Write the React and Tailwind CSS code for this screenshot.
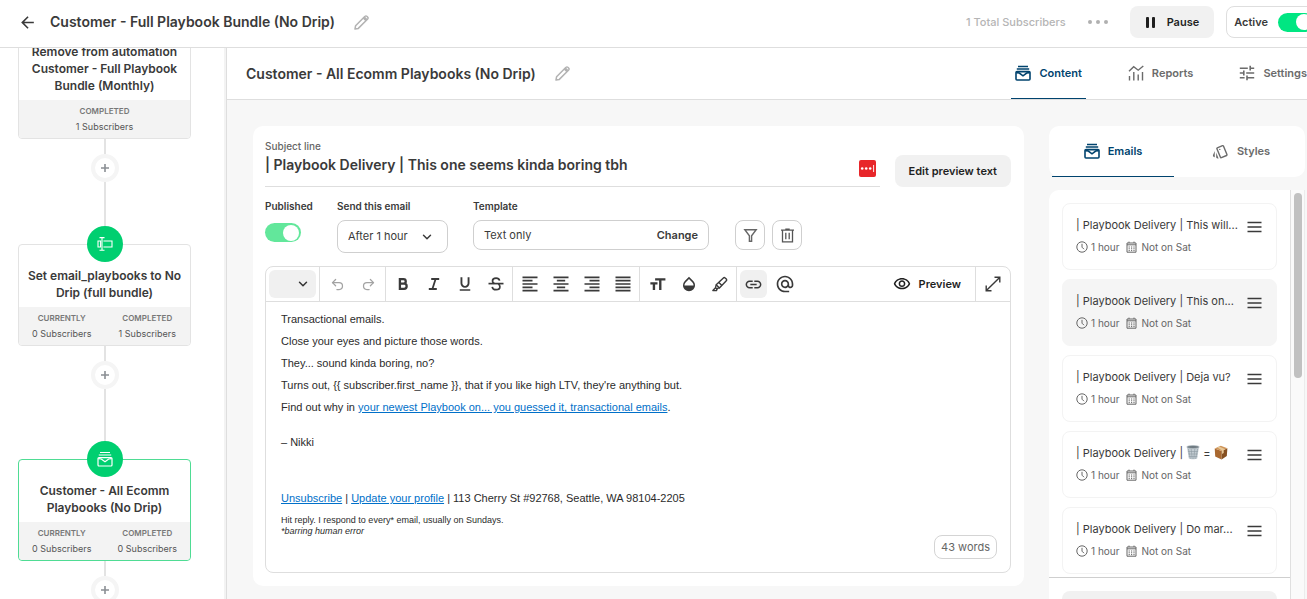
import React, { useState } from 'react';
import {
    MdArrowBack,
    MdTune,
    MdFormatAlignLeft,
    MdFormatAlignCenter,
    MdFormatAlignRight,
    MdFormatAlignJustify,
    MdFormatSize,
    MdOpacity,
    MdLink,
    MdAlternateEmail,
    MdOutlineVisibility,
    MdOutlineStyle,
    MdFormatUnderlined,
} from "react-icons/md";
import { ChevronDown, Undo2, Redo2 } from "lucide-react";

// ---- icons ----

const PencilIcon = () => (
    <svg width="15" height="15" viewBox="0 0 15 15" fill="none" stroke="#b3b3b3" strokeWidth="1.5" strokeLinejoin="round">
        <path d="M1 14l.6-3.3L11 1.3a1.3 1.3 0 0 1 1.9 0l.8.8a1.3 1.3 0 0 1 0 1.9L4.3 13.4 1 14z" />
        <path d="M9.3 3l2.7 2.7M10.3 2l2.7 2.7" />
    </svg>
);

const MailStackIcon = ({ size = 16, stroke = 1.6 }) => (
    <svg width={size} height={size} viewBox="0 0 16 16" fill="none" stroke="currentColor" strokeWidth={stroke}>
        <path d="M3 1.5h10M1.8 4h12.4" />
        <rect x="1" y="6.6" width="14" height="8.4" rx="1" />
        <path d="M1.3 7.6l3 .4L8 10.8 11.7 8l3-.4" />
    </svg>
);

const ReportsIcon = () => (
    <svg width="16" height="16" viewBox="0 0 16 16" fill="none" stroke="currentColor" strokeWidth="1.4">
        <path d="M1.5 15.5V11M5.8 15.5V7M10.2 15.5V9.5M14.5 15.5V7" />
        <path d="M1 6.3l4.7-4.6 4.5 3.5L15.3 1" />
    </svg>
);

const FieldIcon = () => (
    <svg width="16" height="16" viewBox="0 0 16 16" fill="none" stroke="currentColor" strokeWidth="1.1">
        <path d="M2.5 1.6h5M2.5 14.2h5M5 1.6v12.6" />
        <path d="M3.6 5H1v6h2.6V5zM6.4 5H15v6H6.4" />
    </svg>
);

const FilterIcon = () => (
    <svg width="15" height="15" viewBox="0 0 15 15" fill="none" stroke="#666" strokeWidth="1.4">
        <path d="M1.8 1.7h11.4L8.6 7.8v5.5H6.4V7.8z" />
    </svg>
);

const TrashIcon = () => (
    <svg width="15" height="15" viewBox="0 0 15 15" fill="none" stroke="#555" strokeWidth="1.3">
        <path d="M1 2.2h13M5.3 1.2h4.4M2.5 2.2v11.6h10V2.2M5.8 4.8v6.4M9.2 4.8v6.4" />
    </svg>
);

const BoldIcon = () => (
    <svg width="16" height="16" viewBox="0 0 16 16" fill="none" stroke="currentColor" strokeWidth="2.3">
        <path d="M4.9 3.2h3.6a2.2 2.2 0 0 1 0 4.5H4.9zM4.9 7.7h4.2a2.5 2.5 0 0 1 0 5.1H4.9z" />
    </svg>
);

const ItalicIcon = () => (
    <svg width="16" height="16" viewBox="0 0 16 16" fill="none" stroke="currentColor" strokeWidth="1.8">
        <path d="M5.2 3h8M2.8 13h8M9.6 3L6.4 13" />
    </svg>
);

const StrikeIcon = () => (
    <svg width="16" height="16" viewBox="0 0 16 16" fill="none" stroke="currentColor" strokeWidth="1.7">
        <path d="M.5 7.6h15" />
        <path d="M11.6 4.6C11.2 3 9.9 2.2 8.1 2.2c-2 0-3.6 1-3.6 2.8 0 1.2.7 2 1.8 2.6M4.2 10.8c.3 1.8 1.8 2.9 3.9 2.9s3.8-1 3.8-3c0-1.2-.5-2.2-1.6-3.1" />
    </svg>
);

const HighlighterIcon = () => (
    <svg width="16" height="16" viewBox="0 0 16 16" fill="none" stroke="currentColor" strokeWidth="1.4" strokeLinejoin="round">
        <path d="M4.2 8.8l7.2-6.9c.5-.5 1.2-.5 1.7 0l1.2 1.2c.5.5.5 1.2 0 1.7l-6.9 7.1z" />
        <path d="M4.2 8.8l-.7 2.8.9 1 3-.7M6.9 6.4l3 3M3.5 11.8L.9 14.6h3.5l.9-2" />
    </svg>
);

const ExpandIcon = () => (
    <svg width="16" height="16" viewBox="0 0 16 16" fill="none" stroke="currentColor" strokeWidth="1.4">
        <path d="M9.5 1.2h5.3v5.3M6.5 14.8H1.2V9.5M14.6 1.4L1.4 14.6" />
    </svg>
);

const ClockIcon = () => (
    <svg width="12" height="12" viewBox="0 0 12 12" fill="none" stroke="currentColor" strokeWidth="1">
        <circle cx="6" cy="6" r="5.2" />
        <path d="M6 2.8v3.4l2 2" />
    </svg>
);

const CalendarIcon = () => (
    <svg width="11" height="12" viewBox="0 0 11 12" fill="none" stroke="currentColor" strokeWidth="1">
        <path d="M1 2h9v9.2H1zM1 3.8h9M3 .6V2M8 .6V2" />
        <path d="M2.6 6h6M2.6 7.8h6M2.6 9.6h6" strokeDasharray="1.2 1.2" />
    </svg>
);

const MenuIcon = () => (
    <svg width="15" height="12" viewBox="0 0 15 12" stroke="#3a3a3a" strokeWidth="1.4">
        <path d="M.5 1.5h14M.5 6h14M.5 10.5h14" />
    </svg>
);

const BinEmoji = () => (
    <svg role="img" aria-label="wastebasket" className="inline-block align-[-3px]" width="14" height="15" viewBox="0 0 14 15">
        <path d="M1 2l1.8 11.6c1.2 1 7.2 1 8.4 0L13 2z" fill="#c3ccd2" />
        <path d="M2.4 4l2 9.8M5.2 4l1 10M8.8 4l-1 10M11.6 4l-2 9.8M2 6.5h10M2.4 9h9.2M2.8 11.5h8.4" stroke="#8d9aa3" strokeWidth=".6" fill="none" />
        <ellipse cx="7" cy="2" rx="6.3" ry="1.5" fill="#6f7a82" stroke="#b2bcc2" strokeWidth=".7" />
    </svg>
);

const BoxEmoji = () => (
    <svg role="img" aria-label="package" className="inline-block align-[-3px]" width="14" height="15" viewBox="0 0 14 15">
        <path d="M.7 3.6L7.6 6v8.4L1.2 11.5z" fill="#a9682f" />
        <path d="M7.6 6l5.8-2.7-.6 7.8-5.2 3.3z" fill="#865021" />
        <path d="M.7 3.6L6.8.8l6.6 2.5L7.6 6z" fill="#cf955a" />
        <path d="M3.4 2.4L5 1.6l6.3 2.6-1.6.9v3l-1.7.8V5.6z" fill="#e6c797" />
    </svg>
);

// ---- data ----

const emails = [
    { id: 1, title: '| Playbook Delivery | This will...' },
    { id: 2, title: '| Playbook Delivery | This on...', selected: true },
    { id: 3, title: '| Playbook Delivery | Deja vu?' },
    { id: 4, title: <>| Playbook Delivery | <BinEmoji /> = <BoxEmoji /></> },
    { id: 5, title: '| Playbook Delivery | Do mar...' },
];

const mainTabs = [
    { name: 'Content', icon: <MailStackIcon /> },
    { name: 'Reports', icon: <ReportsIcon /> },
    { name: 'Settings', icon: <MdTune size={16} viewBox="2 2 20 20" /> },
];

// ---- parts ----

function Toggle({ id, checked, onChange, label, colorClass }) {
    return (
        <label htmlFor={id} className="block shrink-0 cursor-pointer">
            <input id={id} type="checkbox" className="peer sr-only" aria-label={label} checked={checked} onChange={onChange} />
            <span className={`flex h-[19px] w-9 items-center rounded-full px-0.5 ${checked ? `justify-end ${colorClass}` : 'justify-start bg-gray-300'}`}>
                <span className="size-4 rounded-full bg-white" />
            </span>
        </label>
    );
}

function StepCard({ title, stats, icon, active }) {
    return (
        <div className="flex w-full flex-col items-center">
            {icon && (
                <div className="relative z-10 -mb-[18px] flex size-9 items-center justify-center rounded-full bg-[#00cf70] text-white">
                    {icon}
                </div>
            )}
            <div className={`w-full rounded border bg-white ${active ? 'border-[#4fdc94]' : 'border-[#e3e3e3]'}`}>
                <h3 className="px-1.5 pt-[22px] pb-1.5 text-center text-xs leading-[17px] font-semibold text-[#3a3a3a]">{title}</h3>
                <div className="flex h-[38px] rounded-b bg-[#f3f3f3] pt-1">
                    {stats.map(([label, value]) => (
                        <div key={label} className="flex-1 text-center">
                            <div className="text-[8px] leading-[15px] font-semibold text-[#777]">{label}</div>
                            <div className="text-[9px] leading-[15px] text-[#555]">{value}</div>
                        </div>
                    ))}
                </div>
            </div>
        </div>
    );
}

function Connector({ lineClass }) {
    return (
        <>
            <div className="h-[15px] w-0.5 bg-[#e3e3e3]" />
            <button aria-label="Add step" className="flex size-7 shrink-0 items-center justify-center rounded-full border-4 border-[#f5f5f5] bg-white">
                <svg width="8" height="8" viewBox="0 0 8 8" stroke="#8b8f94" strokeWidth="1.6">
                    <path d="M4 0v8M0 4h8" />
                </svg>
            </button>
            <div className={`w-0.5 shrink-0 bg-[#e3e3e3] ${lineClass}`} />
        </>
    );
}

function ToolGroup({ children, className = 'border-r px-px' }) {
    return (
        <div className={`flex items-center border-[#dedede] ${className}`}>{children}</div>
    );
}

function Tool({ label, children, className = 'text-[#3a3a3a]' }) {
    return (
        <button aria-label={label} className={`flex h-7 w-[31px] items-center justify-center ${className}`}>{children}</button>
    );
}

function EmailCard({ title, selected }) {
    return (
        <li className={`h-[67px] shrink-0 rounded-lg border pt-[13px] pr-3.5 pl-[13px] ${selected ? 'border-[#f5f5f5] bg-[#f5f5f5]' : 'border-[#f3f3f3] bg-white'}`}>
            <div className="flex h-4 items-center justify-between">
                <span className="text-[11px] leading-4 whitespace-nowrap text-[#3a3a3a]">{title}</span>
                <button aria-label="Reorder" className="pt-1">
                    <MenuIcon />
                </button>
            </div>
            <div className="mt-2 flex items-center text-[10px] leading-3 text-[#666]">
                <ClockIcon />
                <span className="ml-[3px]">1 hour</span>
                <span className="mr-1 ml-[7px]"><CalendarIcon /></span>
                <span>Not on Sat</span>
            </div>
        </li>
    );
}

function Editor() {
    return (
        <div className="mt-[13px] rounded-lg border border-[#dedede]">
            <div className="flex h-[35px] border-b border-[#dedede]">
                <div className="relative flex items-center border-r border-[#dedede] px-[3px]">
                    <select aria-label="Text style" className="h-7 w-[47px] appearance-none rounded-md bg-[#f0f0f0]" defaultValue="">
                        <option value=""></option>
                    </select>
                    <ChevronDown size={14} strokeWidth={2.5} className="pointer-events-none absolute right-[9px] text-[#333]" />
                </div>
                <ToolGroup className="border-r pr-px pl-0.5">
                    <Tool label="Undo" className="text-[#a3a3a3]"><Undo2 size={15} /></Tool>
                    <Tool label="Redo" className="text-[#a3a3a3]"><Redo2 size={15} /></Tool>
                </ToolGroup>
                <ToolGroup>
                    <Tool label="Bold"><BoldIcon /></Tool>
                    <Tool label="Italic"><ItalicIcon /></Tool>
                    <Tool label="Underline"><MdFormatUnderlined size={18} /></Tool>
                    <Tool label="Strikethrough"><StrikeIcon /></Tool>
                </ToolGroup>
                <ToolGroup>
                    <Tool label="Align left"><MdFormatAlignLeft size={20} /></Tool>
                    <Tool label="Align center"><MdFormatAlignCenter size={20} /></Tool>
                    <Tool label="Align right"><MdFormatAlignRight size={20} /></Tool>
                    <Tool label="Justify"><MdFormatAlignJustify size={20} /></Tool>
                </ToolGroup>
                <ToolGroup className="border-r pr-px pl-0.5">
                    <Tool label="Font size"><MdFormatSize size={19} /></Tool>
                    <Tool label="Text color"><MdOpacity size={18} /></Tool>
                    <Tool label="Highlight"><HighlighterIcon /></Tool>
                </ToolGroup>
                <ToolGroup className="px-px">
                    <Tool label="Link">
                        <span className="flex h-7 w-[27px] items-center justify-center rounded-md bg-[#f0f0f0]"><MdLink size={19} /></span>
                    </Tool>
                    <Tool label="Personalize"><MdAlternateEmail size={20} /></Tool>
                </ToolGroup>
                <button className="ml-auto flex items-center gap-2 pr-3.5 text-[11px] font-semibold text-[#1f1f1f]">
                    <MdOutlineVisibility size={18} />
                    Preview
                </button>
                <button aria-label="Full screen" className="flex w-[35px] items-center justify-center border-l border-[#dedede] text-[#3a3a3a]">
                    <ExpandIcon />
                </button>
            </div>
            <div className="relative h-[270px] px-[15px] pt-1.5 font-['Liberation_Sans',Arial,sans-serif] text-[11px] leading-[22px] text-[#2b2b2b]">
                <p>Transactional emails.</p>
                <p>Close your eyes and picture those words.</p>
                <p>They... sound kinda boring, no?</p>
                <p>Turns out, {'{{ subscriber.first_name }}'}, that if you like high LTV, they're anything but.</p>
                <p>Find out why in <a href="#playbook" className="text-[#0070c9] underline">your newest Playbook on... you guessed it, transactional emails</a>.</p>
                <p className="mt-[13px]">– Nikki</p>
                <p className="mt-[34px]">
                    <a href="#unsubscribe" className="text-[#0070c9] underline">Unsubscribe</a> | <a href="#profile" className="text-[#0070c9] underline">Update your profile</a> | 113 Cherry St #92768, Seattle, WA 98104-2205
                </p>
                <p className="mt-1.5 text-[9px] leading-[11px]">
                    Hit reply. I respond to every* email, usually on Sundays.<br />
                    <em>*barring human error</em>
                </p>
                <span className="absolute right-[13px] bottom-[13px] flex h-6 items-center rounded-lg border border-[#d4d4d4] bg-white px-1.5 font-['Inter',sans-serif] text-[11px] text-[#666]">43 words</span>
            </div>
        </div>
    );
}

function App() {
    const [active, setActive] = useState(true);
    const [published, setPublished] = useState(true);
    const [tab, setTab] = useState('Content');
    const [subject, setSubject] = useState('| Playbook Delivery | This one seems kinda boring tbh');

    return (
        <div className="flex h-screen flex-col overflow-hidden bg-white font-['Inter',sans-serif] text-[#3a3a3a]">
            {/* Top bar */}
            <header className="flex h-12 shrink-0 items-center border-b border-[#dedede] pb-[3px] pl-[18px]">
                <button aria-label="Back"><MdArrowBack size={19} /></button>
                <h1 className="ml-[13px] text-sm font-semibold">Customer - Full Playbook Bundle (No Drip)</h1>
                <button aria-label="Rename automation" className="ml-[19px]"><PencilIcon /></button>
                <div className="-mr-[15px] ml-auto flex shrink-0 items-center">
                    <span className="text-[11px] font-medium text-[#b5b5b5]">1 Total Subscribers</span>
                    <button aria-label="More" className="ml-[22px] flex gap-1">
                        <span className="size-1 rounded-full bg-[#b0b0b0]" />
                        <span className="size-1 rounded-full bg-[#b0b0b0]" />
                        <span className="size-1 rounded-full bg-[#b0b0b0]" />
                    </button>
                    <button className="ml-[22px] flex h-8 items-center gap-3 rounded-lg bg-[#f1f1f1] pr-[15px] pl-4 text-[11px] font-semibold text-[#1f1f1f]">
                        <svg width="9" height="11" viewBox="0 0 9 11" fill="currentColor">
                            <rect width="3" height="11" rx="1" />
                            <rect x="6" width="3" height="11" rx="1" />
                        </svg>
                        Pause
                    </button>
                    <div className="ml-3 flex h-8 items-center gap-2.5 rounded-lg border border-[#dedede] px-[7px]">
                        <span className="text-[11px] font-semibold">Active</span>
                        <Toggle id="active" label="Active" checked={active} onChange={() => setActive(!active)} colorClass="bg-[#00e682]" />
                    </div>
                </div>
            </header>

            <div className="flex min-h-0 flex-1">
                {/* Automation steps */}
                <aside className="w-[227px] shrink-0 overflow-hidden border-r border-[#dedede]">
                    <div className="flex h-full items-start border-r-2 border-[#f3f3f3] pl-[18px]">
                        <div className="-mt-7 flex w-[173px] flex-col items-center">
                            <StepCard title="Remove from automation Customer - Full Playbook Bundle (Monthly)" stats={[['COMPLETED', '1 Subscribers']]} />
                            <Connector lineClass="h-11" />
                            <StepCard
                                title="Set email_playbooks to No Drip (full bundle)"
                                stats={[['CURRENTLY', '0 Subscribers'], ['COMPLETED', '1 Subscribers']]}
                                icon={<FieldIcon />}
                            />
                            <Connector lineClass="h-[52px]" />
                            <StepCard
                                active
                                title="Customer - All Ecomm Playbooks (No Drip)"
                                stats={[['CURRENTLY', '0 Subscribers'], ['COMPLETED', '0 Subscribers']]}
                                icon={<MailStackIcon stroke={1.2} />}
                            />
                            <Connector lineClass="h-11" />
                        </div>
                    </div>
                </aside>

                <main className="flex min-w-0 flex-1 flex-col bg-[#f7f7f7]">
                    <div className="flex h-[52px] shrink-0 items-center border-b border-[#dedede] bg-white pl-[19px]">
                        <h2 className="text-sm font-semibold">Customer - All Ecomm Playbooks (No Drip)</h2>
                        <button aria-label="Rename sequence" className="ml-[19px]"><PencilIcon /></button>
                        <nav className="-mr-1 ml-auto flex h-full shrink-0 gap-[38px]">
                            {mainTabs.map(({ name, icon }) => (
                                <button
                                    key={name}
                                    onClick={() => setTab(name)}
                                    className={`flex items-center gap-2 border-b px-1 text-[11px] font-semibold ${tab === name ? 'border-[#00436e] text-[#00436e]' : 'border-transparent text-[#6b6b6b]'}`}
                                >
                                    {icon}
                                    {name}
                                </button>
                            ))}
                        </nav>
                    </div>

                    <div className="flex min-h-0 flex-1 items-start gap-[25px] pt-[26px] pr-0.5 pl-[26px]">
                        {/* Email editor */}
                        <section className="min-w-0 flex-1 rounded-[10px] bg-white pt-3.5 pr-[13px] pb-[13px] pl-3">
                            <div className="flex items-end gap-[15px]">
                                <div className="flex flex-1 items-end border-b border-[#dedede]">
                                    <div className="flex-1">
                                        <label htmlFor="subject" className="block text-[10px] leading-3 font-medium text-[#666]">Subject line</label>
                                        <input
                                            id="subject"
                                            className="mb-2.5 block h-6 w-full text-sm font-semibold outline-none"
                                            value={subject}
                                            onChange={(e) => setSubject(e.target.value)}
                                        />
                                    </div>
                                    <svg className="mr-1 mb-[9px]" width="17" height="17" viewBox="0 0 17 17">
                                        <rect width="17" height="17" rx="2" fill="#e8262a" />
                                        <circle cx="3.2" cy="8.5" r="1.3" fill="#fff" />
                                        <circle cx="7.2" cy="8.5" r="1.3" fill="#fff" />
                                        <circle cx="11.2" cy="8.5" r="1.3" fill="#fff" />
                                        <path d="M14.6 5v7" stroke="#fff" strokeWidth=".9" />
                                    </svg>
                                </div>
                                <button className="h-8 rounded-lg bg-[#f1f1f1] px-3.5 text-[11px] font-semibold text-[#1f1f1f]">Edit preview text</button>
                            </div>

                            <div className="mt-3 flex h-[54px] items-start">
                                <div className="w-[72px] shrink-0">
                                    <div className="text-[10px] leading-[14px] font-semibold">Published</div>
                                    <div className="mt-2.5">
                                        <Toggle id="published" label="Published" checked={published} onChange={() => setPublished(!published)} colorClass="bg-[#62e79b]" />
                                    </div>
                                </div>
                                <div className="w-[136px] shrink-0">
                                    <label htmlFor="delay" className="block text-[10px] leading-[14px] font-semibold">Send this email</label>
                                    <div className="relative mt-[7px] flex w-[111px] items-center">
                                        <select id="delay" className="h-[33px] w-full appearance-none rounded-lg border border-[#cfcfcf] bg-white pl-2.5 text-[11px]" defaultValue="1">
                                            <option value="1">After 1 hour</option>
                                        </select>
                                        <ChevronDown size={14} strokeWidth={2.5} className="pointer-events-none absolute right-3.5" />
                                    </div>
                                </div>
                                <div className="w-[236px] shrink-0">
                                    <div className="text-[10px] leading-[14px] font-semibold">Template</div>
                                    <div className="mt-[7px] flex h-[30px] items-center justify-between rounded-lg border border-[#cfcfcf] px-2.5 text-[11px]">
                                        <span>Text only</span>
                                        <button className="font-semibold">Change</button>
                                    </div>
                                </div>
                                <div className="mt-[21px] ml-[26px] flex gap-[7px]">
                                    <button aria-label="Filter" className="flex size-[30px] items-center justify-center rounded-lg border border-[#cfcfcf]"><FilterIcon /></button>
                                    <button aria-label="Delete" className="flex size-[30px] items-center justify-center rounded-lg border border-[#cfcfcf]"><TrashIcon /></button>
                                </div>
                            </div>

                            <Editor />
                        </section>

                        {/* Email list */}
                        <aside className="flex h-full w-64 shrink-0 flex-col">
                            <nav className="flex h-[51px] shrink-0 gap-1.5 rounded-[10px] bg-white px-[3px]">
                                <button className="flex flex-1 items-center justify-center gap-2 border-b border-[#00436e] text-[11px] font-semibold text-[#00436e]">
                                    <MailStackIcon />
                                    Emails
                                </button>
                                <button className="flex flex-1 items-center justify-center gap-2 border-b border-transparent text-[11px] font-semibold text-[#6b6b6b]">
                                    <MdOutlineStyle size={17} />
                                    Styles
                                </button>
                            </nav>
                            <div className="mt-[13px] flex min-h-0 flex-1">
                                <div className="flex min-h-0 min-w-0 flex-1 flex-col rounded-tl-[10px] border-r border-[#e0e0e0] bg-white">
                                    <ul className="flex min-h-0 flex-1 flex-col gap-[9px] overflow-hidden px-[13px] pt-[13px]">
                                        {emails.map((email) => (
                                            <EmailCard key={email.id} {...email} />
                                        ))}
                                    </ul>
                                    <div className="h-[22px] shrink-0 overflow-hidden border-t border-[#cfcfcf] px-[13px] pt-[13px]">
                                        <button aria-label="Add email" className="block h-8 w-full rounded-lg bg-[#f1f1f1]" />
                                    </div>
                                </div>
                                <div className="w-3.5 shrink-0 border-r border-[#ececec] bg-[#fafafa] pt-[3px] pl-[3px]">
                                    <div className="h-[185px] w-2 rounded-full bg-[#c1c1c1]" />
                                </div>
                            </div>
                        </aside>
                    </div>
                </main>
            </div>
        </div>
    );
}

export default App;
